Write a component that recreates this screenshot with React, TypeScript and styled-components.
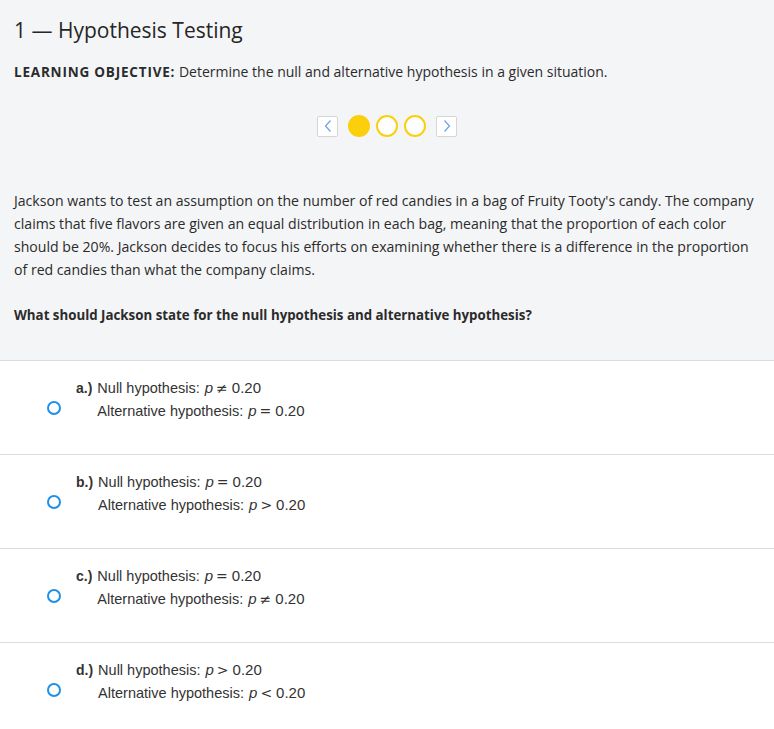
import * as React from "react";
import styled, { createGlobalStyle } from "styled-components";

const GlobalStyle = createGlobalStyle`
  html, body {
    margin: 0;
    padding: 0;
    background: #ffffff;
    font-family: "Open Sans", "Noto Sans", sans-serif;
    color: #2b2b2b;
  }
`;

interface Option {
  letter: string;
  nullOp: string;
  altOp: string;
  nullVal: string;
  altVal: string;
}

const OPTIONS: Option[] = [
  { letter: "a.)", nullOp: "≠", nullVal: "0.20", altOp: "=", altVal: "0.20" },
  { letter: "b.)", nullOp: "=", nullVal: "0.20", altOp: ">", altVal: "0.20" },
  { letter: "c.)", nullOp: "=", nullVal: "0.20", altOp: "≠", altVal: "0.20" },
  { letter: "d.)", nullOp: ">", nullVal: "0.20", altOp: "<", altVal: "0.20" },
];

const Chevron = ({ dir }: { dir: "left" | "right" }) => (
  <svg width="10" height="14" viewBox="0 0 10 14">
    <path
      d={dir === "left" ? "M7.5 1.5 L2.5 7 L7.5 12.5" : "M2.5 1.5 L7.5 7 L2.5 12.5"}
      fill="none"
      stroke="#6b9ff0"
      strokeWidth="1.2"
    />
  </svg>
);

const Formula = ({ op, value }: { op: string; value: string }) => (
  <Math>
    <Var>p</Var>
    <Op>{op}</Op>
    {value}
  </Math>
);

const App: React.FunctionComponent = () => {
  return (
    <Page>
      <GlobalStyle />
      <Header>
        <Title>1 — Hypothesis Testing</Title>
        <Objective>
          <strong>LEARNING OBJECTIVE:</strong> Determine the null and alternative hypothesis in a
          given situation.
        </Objective>
        <Pager>
          <NavButton aria-label="previous">
            <Chevron dir="left" />
          </NavButton>
          <Dot filled />
          <Dot />
          <Dot />
          <NavButton aria-label="next">
            <Chevron dir="right" />
          </NavButton>
        </Pager>
        <Paragraph>
          Jackson wants to test an assumption on the number of red candies in a bag of Fruity
          Tooty's candy. The company claims that five flavors are given an equal distribution in
          each bag, meaning that the proportion of each color should be 20%. Jackson decides to
          focus his efforts on examining whether there is a difference in the proportion of red
          candies than what the company claims.
        </Paragraph>
        <Question>What should Jackson state for the null hypothesis and alternative hypothesis?</Question>
      </Header>
      <Options>
        {OPTIONS.map((o) => (
          <OptionRow key={o.letter}>
            <Radio />
            <OptionBody>
              <Letter>{o.letter}</Letter>
              <Lines>
                <Line>
                  Null hypothesis: <Formula op={o.nullOp} value={o.nullVal} />
                </Line>
                <Line>
                  Alternative hypothesis: <Formula op={o.altOp} value={o.altVal} />
                </Line>
              </Lines>
            </OptionBody>
          </OptionRow>
        ))}
      </Options>
    </Page>
  );
};

const Page = styled.div`
  width: 774px;
`;

const Header = styled.div`
  background: #f4f5f7;
  padding: 17px 14px 36px 14px;
  border-bottom: 1px solid #dcdcdc;
`;

const Title = styled.h1`
  margin: 0;
  font-size: 21px;
  font-weight: 400;
  line-height: 26px;
  color: #262626;
`;

const Objective = styled.p`
  margin: 20px 0 0 0;
  font-size: 14px;
  line-height: 18px;
  color: #2b2b2b;

  strong {
    font-weight: 700;
    font-size: 13.5px;
    letter-spacing: 0.8px;
  }
`;

const Pager = styled.div`
  display: flex;
  align-items: center;
  justify-content: center;
  gap: 6px;
  margin-top: 34px;
`;

const NavButton = styled.div`
  width: 21px;
  height: 21px;
  box-sizing: border-box;
  background: #ffffff;
  border: 1px solid #d6d6d6;
  border-radius: 2px;
  display: flex;
  align-items: center;
  justify-content: center;
  margin: 0 4px;
`;

const Dot = styled.div<{ filled?: boolean }>`
  width: 22px;
  height: 22px;
  box-sizing: border-box;
  border-radius: 50%;
  border: 2px solid #fccf0c;
  background: ${({ filled }) => (filled ? "#fccf0c" : "#ffffff")};
`;

const Paragraph = styled.p`
  margin: 52px 0 0 0;
  font-size: 14.1px;
  line-height: 23px;
  color: #2b2b2b;
`;

const Question = styled.p`
  margin: 25px 0 0 0;
  font-size: 13.3px;
  font-weight: 700;
  line-height: 18px;
  color: #2b2b2b;
`;

const Options = styled.div`
  display: flex;
  flex-direction: column;
`;

const OptionRow = styled.div`
  display: flex;
  align-items: flex-start;
  height: 94px;
  border-bottom: 1px solid #dcdcdc;
  padding: 16px 0 0 47px;
  box-sizing: border-box;
  &:last-child {
    border-bottom: none;
  }
`;

const Radio = styled.div`
  width: 14px;
  height: 14px;
  box-sizing: border-box;
  border-radius: 50%;
  border: 2px solid #1e90e8;
  margin-top: 24px;
`;

const OptionBody = styled.div`
  display: flex;
  margin-left: 15px;
`;

const Letter = styled.span`
  font-family: "Liberation Sans", Arial, sans-serif;
  font-weight: 700;
  font-size: 14px;
  line-height: 23px;
  color: #333;
  margin-right: 5px;
`;

const Lines = styled.div`
  display: flex;
  flex-direction: column;
`;

const Line = styled.div`
  font-family: "Liberation Sans", Arial, sans-serif;
  font-size: 14.5px;
  line-height: 23px;
  height: 23px;
  color: #333;
`;

const Math = styled.span`
  font-size: 15px;
  line-height: 1;
  margin-left: 1px;
`;

const Var = styled.i`
  font-style: italic;
`;

const Op = styled.span`
  font-family: "DejaVu Sans", sans-serif;
  font-size: 14px;
  margin: 0 4px 0 3px;
`;

export default App;
